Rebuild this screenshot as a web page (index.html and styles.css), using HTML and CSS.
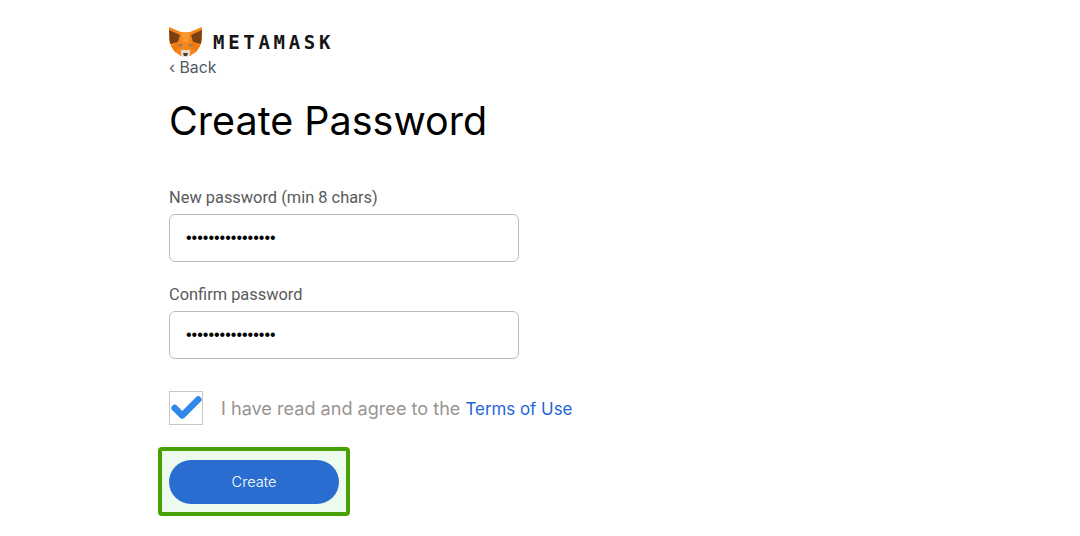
FILE: index.html
```html
<!DOCTYPE html>
<html lang="en">
<head>
  <meta charset="UTF-8" />
  <title>MetaMask - Create Password</title>
  <link rel="stylesheet" href="styles.css">
</head>
<body>
  <div class="container">
    <div class="logo">
      <svg class="fox" width="33" height="30" viewBox="0 0 33 30">
        <polygon points="0,0 12,5 21,5 33,0 33,13 31,19 27,25 21,29 12,29 6,25 2,19 0,13" fill="#f6851b" />
        <polygon points="0,3 11,8 9,15 1,17" fill="#7a3f12" />
        <polygon points="33,3 22,8 24,15 32,17" fill="#7a3f12" />
        <polygon points="12,5 21,5 19,15 14,15" fill="#f9982f" />
        <polygon points="2,19 9,15 13,18 6,25" fill="#f07c12" />
        <polygon points="31,19 24,15 20,18 27,25" fill="#f07c12" />
        <polygon points="8,18 13,17 13,20" fill="#8a7a68" />
        <polygon points="25,18 20,17 20,20" fill="#8a7a68" />
        <polygon points="12,23 21,23 21,28 19,30 14,30 12,28" fill="#e4dacf" />
        <polygon points="14,26 19,26 18,29 15,29" fill="#4a3d33" />
      </svg>
      <span class="wordmark">METAMASK</span>
    </div>
    <a class="back" href="#">&lsaquo; Back</a>
    <h1>Create Password</h1>
    <label class="field-label">New password (min 8 chars)</label>
    <input class="field" type="password" value="aaaaaaaaaaaaaaaa" />
    <label class="field-label">Confirm password</label>
    <input class="field" type="password" value="aaaaaaaaaaaaaaaa" />
    <div class="terms">
      <div class="checkbox">
        <svg width="34" height="26" viewBox="0 0 34 26">
          <path d="M5 13 L13 21 L30 4" fill="none" stroke="#3187e8" stroke-width="7" stroke-linecap="round" stroke-linejoin="round" />
        </svg>
      </div>
      <span class="terms-text">I have read and agree to the <a href="#">Terms of Use</a></span>
    </div>
    <div class="highlight">
      <button class="btn">Create</button>
    </div>
  </div>
</body>
</html>
```

FILE: styles.css
```css
body {
  font-family: 'Inter', sans-serif;
  background-color: #fff;
  color: #000;
  margin: 0;
  padding: 0;
}
.container {
  display: flex;
  flex-direction: column;
  align-items: flex-start;
  padding: 27px 0 0 169px;
}
.logo {
  display: flex;
  align-items: center;
  gap: 11px;
  height: 30px;
}
.wordmark {
  font-family: 'DejaVu Sans Mono', monospace;
  font-size: 19px;
  font-weight: 700;
  letter-spacing: 3.7px;
  color: #161616;
}
.back {
  font-size: 15.8px;
  color: #4f5a66;
  text-decoration: none;
  line-height: 20px;
  margin-top: 1px;
}
h1 {
  font-size: 39.5px;
  font-weight: 400;
  line-height: 50px;
  margin: 18px 0 42px;
}
.field-label {
  font-family: 'Roboto', sans-serif;
  font-size: 16.4px;
  color: #5a5a5a;
  line-height: 20px;
  margin-bottom: 6px;
}
.field {
  box-sizing: border-box;
  width: 350px;
  height: 48px;
  border: 1px solid #bcbcbc;
  border-radius: 6px;
  padding: 0 16px;
  font-size: 16px;
  margin-bottom: 23px;
  background: #fff;
  color: #000;
}
.terms {
  display: flex;
  align-items: center;
  gap: 18px;
  margin-top: 9px;
}
.checkbox {
  box-sizing: border-box;
  width: 34px;
  height: 34px;
  border: 1px solid #c8c8c8;
  display: flex;
  align-items: center;
  justify-content: center;
}
.terms-text {
  font-size: 18.1px;
  color: #9a9490;
}
.terms-text a {
  font-size: 16.9px;
  color: #1f66d8;
  text-decoration: none;
}
.highlight {
  box-sizing: border-box;
  width: 192px;
  height: 69px;
  margin: 22px 0 0 -11px;
  border: 4px solid #47a100;
  border-radius: 4px;
  background: #ecfbee;
  display: flex;
  align-items: center;
  justify-content: center;
}
.btn {
  width: 170px;
  height: 44px;
  border: none;
  border-radius: 22px;
  background: #2a6dd0;
  color: #fff;
  font-family: 'Inter', sans-serif;
  font-size: 14.6px;
  font-weight: 300;
}
```
